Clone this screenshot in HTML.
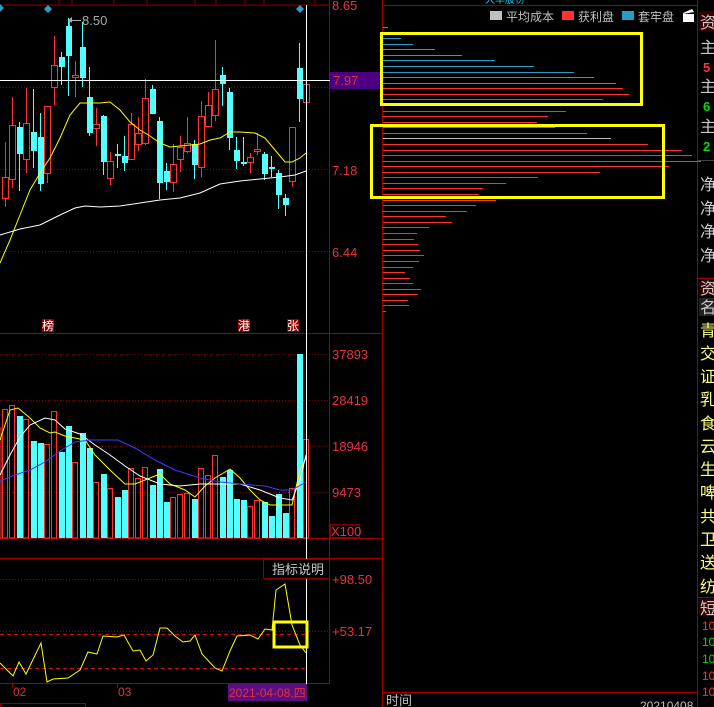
<!DOCTYPE html>
<html><head><meta charset="utf-8">
<style>
html,body{margin:0;padding:0;background:#000;width:714px;height:707px;overflow:hidden}
svg{display:block}
text{font-family:"Liberation Sans","Noto Sans CJK SC",sans-serif}
.ax{fill:#e8343c;font-size:13px}
.sb{font-family:"Liberation Sans","WenQuanYi Zen Hei","Noto Sans CJK SC",sans-serif;font-size:16px}
</style></head><body>
<svg id="s" width="714" height="707" xmlns="http://www.w3.org/2000/svg">
<rect width="714" height="707" fill="#000"/>
<!-- top tab strip -->
<g stroke="#8b0000" fill="none" stroke-width="1">
<line x1="0" y1="5" x2="330" y2="5"/>
<line x1="59" y1="0" x2="59" y2="5"/><line x1="72" y1="0" x2="72" y2="5"/><line x1="114" y1="0" x2="114" y2="5"/><line x1="147" y1="0" x2="147" y2="5"/><line x1="195" y1="0" x2="195" y2="5"/><line x1="216" y1="0" x2="216" y2="5"/><line x1="245" y1="0" x2="245" y2="5"/><line x1="264" y1="0" x2="264" y2="5"/><line x1="315" y1="0" x2="315" y2="5"/>
</g>
<!-- frame lines -->
<g stroke="#a00000" stroke-width="1">
<line x1="329.5" y1="0" x2="329.5" y2="684"/>
<line x1="382.5" y1="0" x2="382.5" y2="707"/>
<line x1="697.5" y1="0" x2="697.5" y2="707"/>
<line x1="0" y1="333.5" x2="382" y2="333.5"/>
<line x1="0" y1="538.5" x2="382" y2="538.5"/>
<line x1="0" y1="558.5" x2="382" y2="558.5"/>
<line x1="0" y1="683.5" x2="330" y2="683.5"/>
<line x1="383" y1="5.5" x2="697" y2="5.5"/>
<line x1="383" y1="692.5" x2="697" y2="692.5"/>
<line x1="698" y1="160.5" x2="714" y2="160.5" stroke="#444"/>
<line x1="698" y1="278.5" x2="714" y2="278.5"/>
<line x1="698" y1="597.5" x2="714" y2="597.5"/>
</g>
<!-- dotted grid -->
<g stroke="#8b0000" stroke-dasharray="1,2" stroke-width="1">
<line x1="0" y1="87.5" x2="330" y2="87.5"/>
<line x1="0" y1="169.5" x2="330" y2="169.5"/>
<line x1="0" y1="251.5" x2="330" y2="251.5"/>
<line x1="0" y1="354.5" x2="330" y2="354.5"/>
<line x1="0" y1="400.5" x2="330" y2="400.5"/>
<line x1="0" y1="446.5" x2="330" y2="446.5"/>
<line x1="0" y1="492.5" x2="330" y2="492.5"/>
<line x1="0" y1="579.5" x2="330" y2="579.5"/>
<line x1="0" y1="631.5" x2="330" y2="631.5"/>
</g>
<g stroke="#d01010" stroke-dasharray="4,3" stroke-width="1">
<line x1="0" y1="634.5" x2="306" y2="634.5"/>
<line x1="0" y1="668.5" x2="306" y2="668.5"/>
</g>
<g id="candles"></g>
<g id="vols"></g>
<g id="chips"></g>
<!-- MA lines -->
<polyline fill="none" stroke="#ffff00" stroke-width="1" points="0,263 10,240 20,215 30,190 40,173 50,158 60,138 70,115 80,103 88,103 100,103 110,102 120,110 130,122 140,130 150,136 160,143 170,147 180,146 190,145 200,144 210,140 220,138 230,132 240,132 255,133 265,138 275,150 285,162 292,162 300,158 306,153"/>
<polyline fill="none" stroke="#ffffff" stroke-width="1" points="0,235 20,229 40,225 60,215 75,208 85,206 100,207 120,206 140,203 160,200 180,198 200,193 220,184 240,181 260,179 280,177 295,175 306,171"/>
<polyline fill="none" stroke="#ffff00" stroke-width="1" points="0,440 10,410 18,408 30,418 40,428 50,433 55,432 65,436 75,438 85,440 95,455 110,470 125,484 135,484 150,478 160,474 170,484 185,490 195,497 205,486 215,478 225,472 230,469 240,478 250,490 260,500 270,505 285,505 292,505 300,470 306,458"/>
<polyline fill="none" stroke="#ffffff" stroke-width="1" points="0,475 10,455 20,437 30,425 45,418 55,420 65,429 80,434 95,445 110,455 125,466 140,476 160,484 180,486 200,484 215,484 240,484 260,490 280,498 292,500 300,480 306,455"/>
<polyline fill="none" stroke="#3c3cff" stroke-width="1" points="0,481 15,475 30,470 45,462 60,451 75,442 90,440 118,440 135,448 155,460 175,470 200,478 220,482 240,484 265,486 280,490 292,490 306,482"/>
<polyline fill="none" stroke="#ffff00" stroke-width="1" points="0,663 13,676 19,662 26,674 41,643 47,682 53,679 68,678 80,670 88,652 97,654 103,636 117,637 124,635 133,651 140,650 146,661 153,655 160,628 167,628 175,636 183,642 190,641 195,635 202,654 215,668 222,671 230,651 237,636 250,635 258,639 265,629 272,630 276,590 285,584 292,625 300,645 306,653"/>
<!-- crosshair -->
<line x1="0" y1="80.5" x2="382" y2="80.5" stroke="#fff"/>
<line x1="306.5" y1="5" x2="306.5" y2="684" stroke="#fff"/>
<!-- diamonds -->
<g fill="#2aa0c8"><path d="M0 4l4 4-4 4z"/><path d="M48 5l4 4-4 4-4-4z"/><path d="M300 5l4 4-4 4-4-4z"/></g>
<!-- 8.50 label -->
<line x1="70" y1="20.5" x2="81" y2="20.5" stroke="#aaa"/><path d="M68 20l4-3v6z" fill="#aaa"/>
<line x1="69.5" y1="20" x2="69.5" y2="26" stroke="#aaa"/>
<text x="82" y="25" fill="#aaa" font-size="13">8.50</text>
<!-- price axis -->
<text class="ax" x="332" y="10">8.65</text>
<rect x="330" y="72" width="52" height="17" fill="#4b0082"/>
<text x="333" y="85" fill="#e0303a" font-size="13">7.97</text>
<text class="ax" x="332" y="175">7.18</text>
<text class="ax" x="332" y="257">6.44</text>
<text class="ax" x="332" y="359">37893</text>
<text class="ax" x="332" y="405">28419</text>
<text class="ax" x="332" y="451">18946</text>
<text class="ax" x="332" y="497">9473</text>
<rect x="330.5" y="524.5" width="29" height="13" fill="none" stroke="#8b0000"/>
<text class="ax" x="331" y="536">X100</text>
<text class="ax" x="332" y="584">+98.50</text>
<text class="ax" x="332" y="636">+53.17</text>
<!-- event labels -->
<g font-size="12"><rect x="42" y="319" width="12" height="13" fill="#8b0000"/><text x="42" y="330" fill="#fff" font-family="'Noto Sans CJK SC',sans-serif">榜</text>
<rect x="238" y="319" width="12" height="13" fill="#8b0000"/><text x="238" y="330" fill="#fff" font-family="'Noto Sans CJK SC',sans-serif">港</text>
<rect x="287" y="319" width="12" height="13" fill="#8b0000"/><text x="287" y="330" fill="#fff" font-family="'Noto Sans CJK SC',sans-serif">张</text></g>
<!-- indicator explanation -->
<rect x="263.5" y="559.5" width="66" height="19" fill="#000" stroke="#8b0000"/>
<text x="272" y="574" fill="#c8c8c8" font-size="13" font-family="'Noto Sans CJK SC',sans-serif">指标说明</text>
<rect x="274" y="622" width="33" height="25" fill="none" stroke="#ffff00" stroke-width="3"/>
<!-- date axis -->
<line x1="12.5" y1="684" x2="12.5" y2="688" stroke="#a00000"/><line x1="117.5" y1="684" x2="117.5" y2="688" stroke="#a00000"/>
<text x="13" y="696" fill="#e0303a" font-size="12">02</text>
<text x="118" y="696" fill="#e0303a" font-size="12">03</text>
<rect x="228" y="684" width="79" height="17" fill="#5a1080"/>
<text x="229" y="697" fill="#e0303a" font-size="12" font-family="'Liberation Sans','Noto Sans CJK SC',sans-serif">2021-04-08,四</text>
<rect x="0.5" y="703.5" width="85" height="6" fill="none" stroke="#8b0000"/>
<!-- chip legend -->
<rect x="490" y="11" width="12" height="9" fill="#c0c0c0"/>
<text x="506" y="21" fill="#c0c0c0" font-size="12" font-family="'Noto Sans CJK SC',sans-serif">平均成本</text>
<rect x="562" y="11" width="12" height="9" fill="#ff3232"/>
<text x="578" y="21" fill="#c0c0c0" font-size="12" font-family="'Noto Sans CJK SC',sans-serif">获利盘</text>
<rect x="622" y="11" width="12" height="9" fill="#2a9ac8"/>
<text x="638" y="21" fill="#c0c0c0" font-size="12" font-family="'Noto Sans CJK SC',sans-serif">套牢盘</text>
<rect x="683" y="14" width="11" height="8" fill="#fff"/><path d="M683 13l9-4 2 3-11 2z" fill="#fff"/>
<text x="485" y="3" fill="#29c0e0" font-size="10">大华股份</text>
<!-- yellow boxes -->
<rect x="381.5" y="33.5" width="260" height="71" fill="none" stroke="#ffff00" stroke-width="3"/>
<rect x="371.5" y="125.5" width="292" height="72" fill="none" stroke="#ffff00" stroke-width="3"/>
<text x="386" y="705" fill="#c0c0c0" font-size="13" font-family="'Noto Sans CJK SC',sans-serif">时间</text>
<text x="640" y="710" fill="#c0c0c0" font-size="12">20210408</text>
<!-- sidebar -->
<rect x="699" y="11" width="15" height="20" fill="#3a0000"/>
<rect x="699" y="281" width="15" height="15" fill="#3a0000"/>
<rect x="699" y="298" width="15" height="18" fill="#222"/>
<rect x="699" y="599" width="15" height="17" fill="#3a0000"/>
<g class="sb" fill="#c8c8c8">
<text class="sb" x="700" y="28">资</text>
<text class="sb" x="700" y="53">主</text>
<text class="sb" x="700" y="92">主</text>
<text class="sb" x="700" y="132">主</text>
<text class="sb" x="700" y="190">净</text>
<text class="sb" x="700" y="214">净</text>
<text class="sb" x="700" y="237">净</text>
<text class="sb" x="700" y="261">净</text>
<text class="sb" x="700" y="294">资</text>
<text class="sb" x="700" y="313">名</text>
<text class="sb" x="700" y="614">短</text>
</g>
<g font-size="13" font-weight="bold"><text x="703" y="72" fill="#ff3232">5</text><text x="703" y="111" fill="#00e000">6</text><text x="703" y="151" fill="#00e000">2</text></g>
<g fill="#ffff80">
<text class="sb" x="700" y="336">青</text><text class="sb" x="700" y="359">交</text><text class="sb" x="700" y="382">证</text><text class="sb" x="700" y="405">乳</text><text class="sb" x="700" y="429">食</text><text class="sb" x="700" y="452">云</text><text class="sb" x="700" y="475">生</text><text class="sb" x="700" y="498">啤</text><text class="sb" x="700" y="522">共</text><text class="sb" x="700" y="545">卫</text><text class="sb" x="700" y="568">送</text><text class="sb" x="700" y="592">纺</text>
</g>
<g font-size="12"><text x="702" y="630" fill="#ff3232">10</text><text x="702" y="646" fill="#00e000">10</text><text x="702" y="663" fill="#00e000">10</text><text x="702" y="680" fill="#ff3232">10</text><text x="702" y="696" fill="#ff3232">10</text></g>
</svg>
<script>
var NS="http://www.w3.org/2000/svg";
function el(p,t,a){var e=document.createElementNS(NS,t);for(var k in a)e.setAttribute(k,a[k]);p.appendChild(e);}
var C=[['r',177,198,142,207],['r',125,179,97,188],['c',127,153,122,191],['r',123,159,88,173],['c',132,150,89,168],['c',137,183,113,191],['r',106,173,106,183],['r',65,87,36,105],['c',57,66,52,85],['c',26,55,18,96],['r',75,77,61,97],['c',47,77,22,87],['c',97,132,67,136],['r',124,128,108,146],['c',116,161,115,175],['r',161,178,152,185],['c',154,155,144,168],['c',156,162,136,171],['r',124,159,113,160],['r',133,144,117,151],['r',98,143,79,145],['c',89,113,85,114],['c',121,182,117,199],['c',171,181,163,190],['r',164,182,144,192],['r',147,159,136,172],['r',143,151,117,153],['c',144,164,140,179],['r',116,167,101,177],['r',105,126,92,127],['r',89,115,40,121],['c',75,83,67,106],['c',92,137,88,150],['c',150,160,137,169],['c',162,163,137,166],['r',157,162,153,173],['r',149,151,133,155],['c',154,173,152,180],['c',167,168,156,177],['c',173,194,170,209],['c',198,204,194,216],['r',127,181,127,187],['c',68,98,43,122],['r',84,102,53,122]];
var V=[409,405,416,419,441,443,444,411,452,426,462,433,448,482,474,488,497,490,468,478,467,485,469,502,497,494,493,499,468,475,455,477,470,499,500,506,500,502,516,494,513,488,354,439];
var g=document.getElementById('candles'),gv=document.getElementById('vols');
for(var i=0;i<C.length;i++){var c=C[i],x=5+7*i,col=c[0]=='r'?'#ff3232':'#54ffff';
 if(c[0]=='r'){el(g,'line',{x1:x+.5,y1:c[3],x2:x+.5,y2:c[1],stroke:col});el(g,'line',{x1:x+.5,y1:c[2],x2:x+.5,y2:c[4],stroke:col});el(g,'rect',{x:x-2.5,y:c[1]+.5,width:6,height:Math.max(1,c[2]-c[1]),fill:'none',stroke:col});}
 else{el(g,'line',{x1:x+.5,y1:c[3],x2:x+.5,y2:c[4],stroke:col});el(g,'rect',{x:x-2,y:c[1],width:6,height:Math.max(1,c[2]-c[1]+1),fill:col});}
 var vt=V[i];
 if(c[0]=='r')el(gv,'rect',{x:x-2.5,y:vt+.5,width:5,height:538-vt-.5,fill:'none',stroke:'#ff3232'});
 else el(gv,'rect',{x:x-2,y:vt,width:6,height:538-vt,fill:'#54ffff'});
}
el(gv,'rect',{x:-2,y:428,width:3,height:110,fill:'none',stroke:'#ff3232'});
var H=[[27,5,'b'],[38,18,'b'],[44,30,'b'],[49,52,'b'],[55,79,'b'],[60,112,'b'],[66,151,'b'],[72,191,'b'],[77,211,'b'],[83,233,'b'],[88,240,'r'],[94,246,'r'],[99,220,'r'],[111,183,'r'],[116,165,'r'],[122,154,'r'],[127,172,'r'],[133,204,'r'],[138,228,'g'],[144,265,'r'],[150,299,'r'],[155,309,'r'],[161,318,'r'],[166,286,'r'],[172,217,'r'],[177,155,'r'],[183,123,'r'],[188,100,'r'],[194,96,'r'],[200,113,'r'],[205,93,'r'],[211,84,'r'],[216,63,'r'],[222,69,'r'],[227,46,'r'],[233,34,'r'],[239,31,'r'],[244,35,'r'],[250,37,'r'],[255,41,'r'],[261,36,'r'],[267,30,'r'],[272,22,'r'],[278,27,'r'],[283,30,'r'],[289,38,'r'],[294,35,'r'],[300,25,'r'],[305,26,'r'],[311,3,'r']];
var gc=document.getElementById('chips'),cm={b:'#2a9ac8',r:'#ff3232',g:'#c0c0c0'};
H.forEach(function(h){el(gc,'rect',{x:383,y:h[0],width:h[1],height:1,fill:cm[h[2]]});});
</script>
</body></html>
